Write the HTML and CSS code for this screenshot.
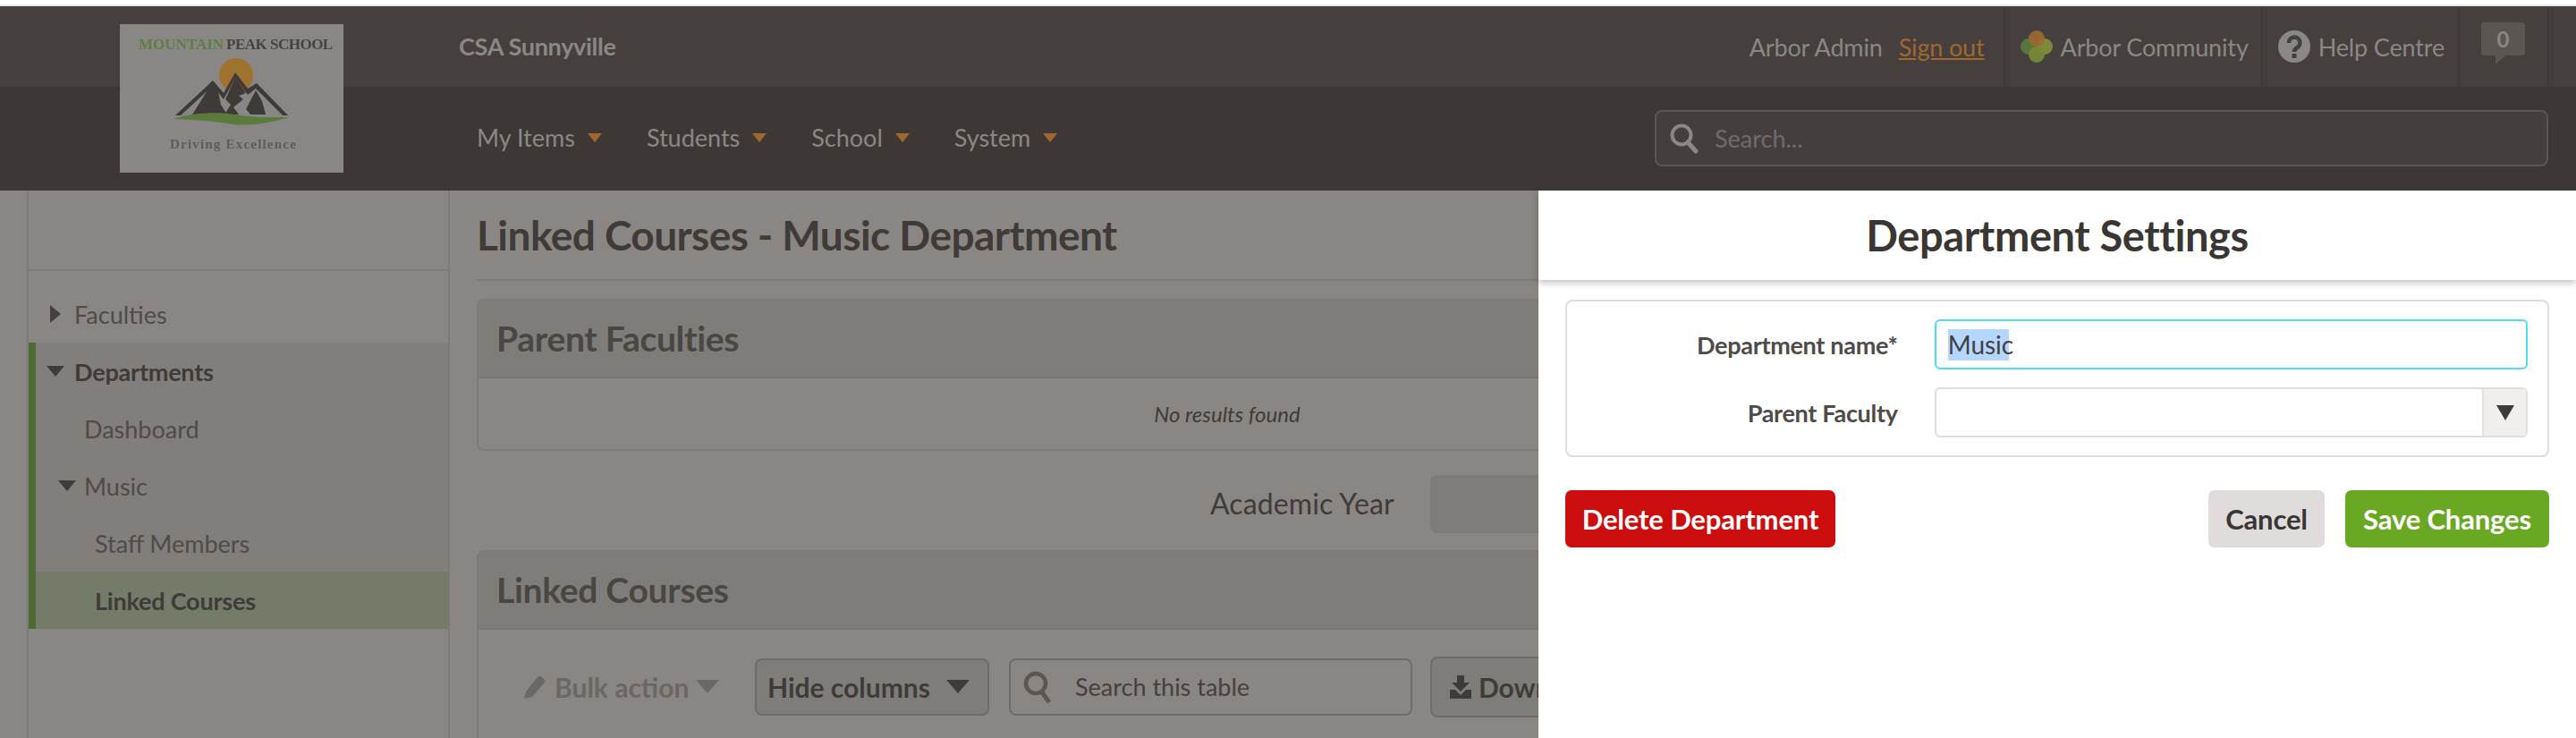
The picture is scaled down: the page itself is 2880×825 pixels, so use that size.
FILE: index.html
```html
<!DOCTYPE html>
<html lang="en">
<head>
<meta charset="utf-8">
<title>Linked Courses - Music Department</title>
<link rel="stylesheet" href="styles.css">
</head>
<body>
<div class="top-strip"></div>
<header class="header">
  <div class="logo">
    <svg class="logo-art" viewBox="0 0 250 166" width="250" height="166">
      <text x="21" y="28" class="logo-title logo-green">MOUNTAIN</text>
      <text x="119" y="28" class="logo-title logo-dark logo-tight">PEAK SCHOOL</text>
      <circle cx="130" cy="57" r="19" fill="#a0722f"/>
      <path d="M62 102 L104 63 L116 77 L129 54 L143 72 L153 66 L188 102 L182 102 L152 72 L143 79 L129 60 L116 84 L104 69 L68 102Z" fill="#3d3a38"/>
      <path d="M81 101 L103 66 L110 76 L113 90 L120 101Z M118 84 L129 60 L141 77 L133 80 L138 84 L127 93 L133 101 L117 101 L124 90Z M141 95 L152 74 L159 86 L163 101 L146 101Z" fill="#3d3a38"/>
      <path d="M60 106 C85 98 115 98 135 102 C155 105 175 104 189 104 C170 110 150 114 125 112 C105 108 80 107 60 106Z" fill="#5b7b3c"/>
      <text x="56" y="139" class="logo-tag">Driving Excellence</text>
    </svg>
  </div>
  <div class="school-name">CSA Sunnyville</div>
  <div class="top-links">
    <span class="user">Arbor Admin</span>
    <a class="signout">Sign out</a>
    <span class="top-sep"></span>
    <span class="top-link link-community">
      <svg class="community" viewBox="0 0 36 36" width="36" height="36">
        <circle cx="9" cy="18" r="9" fill="#57763f"/>
        <circle cx="27" cy="18" r="9" fill="#7c8a3a"/>
        <circle cx="18" cy="27" r="9" fill="#788a35" opacity=".92"/>
        <circle cx="18" cy="9" r="9" fill="#9c6a34" opacity=".9"/>
      </svg>
      Arbor Community
    </span>
    <span class="top-sep"></span>
    <span class="top-link link-help">
      <svg viewBox="0 0 36 36" width="36" height="36">
        <circle cx="18" cy="18" r="18" fill="#8a8886"/>
        <path d="M12 14 a6.2 6.2 0 1 1 9.5 5 c-2.5 1.6 -3.5 2.6 -3.5 5" fill="none" stroke="#45403d" stroke-width="4.6"/>
        <rect x="15.5" y="26" width="5" height="5" fill="#45403d"/>
      </svg>
      Help Centre
    </span>
    <span class="top-sep"></span>
    <span class="badge">0</span>
    <span class="top-sep last"></span>
  </div>
  <nav class="mainnav">
    <a class="nav-item">My Items<i class="caret caret-orange"></i></a>
    <a class="nav-item">Students<i class="caret caret-orange"></i></a>
    <a class="nav-item">School<i class="caret caret-orange"></i></a>
    <a class="nav-item">System<i class="caret caret-orange"></i></a>
  </nav>
  <div class="global-search">
    <svg viewBox="0 0 34 34" width="34" height="34"><circle cx="14" cy="13" r="10.5" fill="none" stroke="#8a8886" stroke-width="4"/><path d="M21 21 L30 31" stroke="#8a8886" stroke-width="5" stroke-linecap="round"/></svg>
    <span>Search...</span>
  </div>
</header>
<div class="app">
  <aside class="sidebar">
    <div class="side-top"></div>
    <ul class="side-nav">
      <li class="side-row lvl0"><i class="caret-right"></i>Faculties</li>
      <li class="side-group">
        <div class="side-row lvl0 strong"><i class="caret caret-dark"></i>Departments</div>
        <div class="side-row lvl1">Dashboard</div>
        <div class="side-row lvl1"><i class="caret caret-dark"></i>Music</div>
        <div class="side-row lvl2">Staff Members</div>
        <div class="side-row lvl2 strong active">Linked Courses</div>
      </li>
    </ul>
  </aside>
  <main class="main">
    <h1 class="page-title">Linked Courses - Music Department</h1>
    <section class="card">
      <h2 class="card-head">Parent Faculties</h2>
      <div class="empty">No results found</div>
    </section>
    <div class="year-row">
      <span class="year-label">Academic Year</span>
      <span class="year-select"></span>
    </div>
    <section class="card card-open">
      <h2 class="card-head">Linked Courses</h2>
      <div class="toolbar">
        <span class="bulk">
          <svg viewBox="0 0 24 26" width="24" height="26"><path d="M0 26 L2 18 L15 2 Q17 0 20 2 L23 5 Q24 7 22 9 L9 24Z" fill="#6a6764"/></svg>
          Bulk action<i class="caret caret-dim"></i>
        </span>
        <span class="tool-btn hide-cols">Hide columns<i class="caret caret-dark"></i></span>
        <span class="table-search">
          <svg viewBox="0 0 32 36" width="32" height="36"><circle cx="14" cy="14" r="11" fill="none" stroke="#5c5653" stroke-width="4.5"/><path d="M21 24 L29 35" stroke="#5c5653" stroke-width="5"/></svg>
          Search this table
        </span>
        <span class="tool-btn download">
          <svg viewBox="0 0 24 26" width="24" height="26"><path d="M8 0 H16 V8 H22 L12 18 L2 8 H8Z M0 16 H6 L12 22 L18 16 H24 V26 H0Z" fill="#3f3b38"/></svg>
          Download
        </span>
      </div>
    </section>
  </main>
  <section class="drawer">
    <h2 class="drawer-title">Department Settings</h2>
    <div class="drawer-body">
      <form class="form-box">
        <div class="form-row">
          <label class="form-label">Department name*</label>
          <div class="field field-focus"><span class="selected">Music</span></div>
        </div>
        <div class="form-row">
          <label class="form-label">Parent Faculty</label>
          <div class="field field-select"><span class="select-arrow"><i class="caret caret-dark"></i></span></div>
        </div>
      </form>
      <div class="actions">
        <button class="btn btn-danger" type="button">Delete Department</button>
        <button class="btn btn-plain push" type="button">Cancel</button>
        <button class="btn btn-go" type="button">Save Changes</button>
      </div>
    </div>
  </section>
</div>
</body>
</html>
```
FILE: styles.css
```css
* { box-sizing: border-box; }
html, body { margin: 0; height: 825px; overflow: hidden; }
body { background: #fff; font-family: "Lato", "Open Sans", sans-serif; font-size: 28px; color: #45403d; }
ul { list-style: none; margin: 0; padding: 0; }
h1, h2 { margin: 0; }
i { display: inline-block; }

.top-strip { height: 7px; border-bottom: 2px solid #e6e6e6; background: #fff; }

.header {
  height: 206px;
  display: grid;
  grid-template-columns: 134px 250px 1466px 1030px;
  grid-template-rows: 90px 116px;
  background: linear-gradient(#45403d 0, #45403d 90px, #3d3835 90px);
}
.logo { grid-column: 2; grid-row: 1 / 3; align-self: start; margin-top: 20px; height: 166px; background: #898785; }
.logo-art { display: block; filter: blur(.5px); }
.logo-title { font-family: "Liberation Serif", serif; font-weight: 700; font-size: 17px; }
.logo-tight { letter-spacing: -.5px; }
.logo-green { fill: #5f7f42; }
.logo-dark { fill: #454240; }
.logo-tag { font-family: "Liberation Serif", serif; font-weight: 700; font-size: 15px; letter-spacing: 1.2px; fill: #5e5c5a; }

.school-name { grid-column: 3; grid-row: 1; padding: 0 0 2px 129px; align-self: center; font-weight: 700; font-size: 27px; color: #8a8886; letter-spacing: -.3px; }

.top-links { grid-column: 3 / 5; grid-row: 1; justify-self: end; display: flex; align-items: center; height: 90px; color: #8a8886; font-size: 27px; padding-right: 30px; letter-spacing: -.15px; }
.user { margin-right: 18px; }
.signout { color: #a0682e; text-decoration: underline; margin-right: 21px; }
.top-sep { width: 2px; height: 90px; background: #3e3a37; }
.top-link { display: flex; align-items: center; gap: 9px; padding: 0 17px; }
.link-community { padding-right: 14px; }
.link-help { padding-right: 15px; }
.badge { width: 49px; height: 37px; margin: -18px 25px 0 24px; background: #5c5652; border-radius: 3px; color: #8a8886; font-weight: 700; font-size: 24px; line-height: 37px; text-align: center; position: relative; }
.badge::after { content: ""; position: absolute; left: 16px; top: 37px; border-left: 0 solid transparent; border-right: 12px solid transparent; border-top: 10px solid #5c5652; }

.mainnav { grid-column: 3; grid-row: 2; align-self: start; display: flex; gap: 50px; padding: 40px 0 0 149px; color: #8a8886; font-size: 27px; }
.nav-item { display: flex; align-items: center; gap: 14px; }

.caret { width: 0; height: 0; border-left: 10px solid transparent; border-right: 10px solid transparent; border-top: 12px solid #000; }
.caret-orange { border-top-color: #a0682e; border-left-width: 8px; border-right-width: 8px; border-top-width: 10px; margin-top: 1px; }
.caret-dark { border-top-color: #3f3b38; }
.caret-dim { border-top-color: #6a6764; }
.caret-right { width: 0; height: 0; border-top: 10px solid transparent; border-bottom: 10px solid transparent; border-left: 12px solid #45403d; }

.global-search { grid-column: 4; grid-row: 2; margin: 26px 31px 27px 0; height: 63px; display: flex; align-items: center; gap: 17px; padding-left: 14px; background: #443f3e; border: 2px solid #5b5653; border-radius: 8px; color: #6f6c6a; font-size: 27px; }

.app { position: relative; display: flex; height: 612px; overflow: hidden; background: #8a8684; }
.sidebar { width: 503px; flex: none; padding-left: 30px; display: flex; flex-direction: column; }
.side-top { height: 90px; border-left: 2px solid #7d7a78; border-right: 2px solid #7d7a78; border-bottom: 2px solid #7d7a78; }
.side-nav { flex: 1; border-left: 2px solid #7d7a78; border-right: 2px solid #7d7a78; padding-top: 16px; }
.side-row { height: 64px; display: flex; align-items: center; position: relative; font-size: 27px; color: #4f4b48; }
.lvl0 { padding-left: 51px; }
.lvl0 .caret-right { position: absolute; left: 24px; }
.strong { font-weight: 700; color: #3f3b38; letter-spacing: -.2px; }
.side-group { background: #827e7c; border-left: 8px solid #4f6b33; }
.side-group .lvl0 { padding-left: 43px; }
.side-group .lvl0 .caret { position: absolute; left: 12px; }
.side-group .lvl1 { padding-left: 54px; }
.side-group .lvl1 .caret { position: absolute; left: 25px; }
.side-group .lvl2 { padding-left: 66px; }
.active { background: #747b68; }

.main { width: 1738px; flex: none; padding: 0 30px; }
.page-title { height: 101px; border-bottom: 2px solid #7d7a78; font-size: 46px; line-height: 100px; font-weight: 700; color: #3f3b38; letter-spacing: -.55px; }
.card { margin-top: 20px; border: 2px solid #7d7a78; border-radius: 8px; }
.card-head { height: 87px; padding-left: 20px; background: #7f7d7a; border-bottom: 2px solid #787572; border-radius: 6px 6px 0 0; font-size: 39px; line-height: 85px; color: #4a4643; letter-spacing: -.3px; }
.empty { height: 79px; line-height: 79px; text-align: center; font-style: italic; font-size: 24px; color: #3f3b38; }
.year-row { height: 111px; padding: 27px 0 19px 820px; display: flex; gap: 40px; align-items: center; }
.year-label { font-size: 32px; color: #3f3b38; letter-spacing: .1px; margin-top: -2px; }
.year-select { width: 300px; height: 65px; background: #7f7d7a; border: 2px solid #7d7a78; border-radius: 8px; }
.card-open { margin-top: 0; height: 300px; }
.toolbar { display: flex; align-items: center; height: 130px; padding: 0 0 3px 51px; font-size: 30px; }
.bulk { display: flex; align-items: center; gap: 10px; font-weight: 700; color: #6a6764; width: 258px; }
.bulk .caret { margin-left: -2px; border-left-width: 13px; border-right-width: 13px; border-top-width: 15px; }
.tool-btn { display: flex; align-items: center; font-weight: 700; font-size: 30px; color: #3f3b38; background: #7f7d7a; border: 2px solid #6f6c69; border-radius: 8px; }
.hide-cols { width: 262px; height: 64px; padding-left: 12px; gap: 18px; }
.hide-cols .caret { border-left-width: 13px; border-right-width: 13px; border-top-width: 15px; }
.table-search { display: flex; align-items: center; gap: 26px; width: 451px; height: 64px; margin-left: 22px; padding-left: 14px; border: 2px solid #6f6c69; border-radius: 8px; color: #45403d; font-size: 27px; }
.download { width: 260px; height: 68px; margin-left: 20px; padding-left: 20px; gap: 8px; }

.drawer { position: absolute; top: 0; left: 1720px; width: 1160px; height: 612px; background: #fff; }
.drawer-title { height: 100px; line-height: 100px; text-align: center; font-size: 47px; color: #3a3633; box-shadow: 0 3px 8px rgba(0,0,0,.25); letter-spacing: -.4px; position: relative; }
.drawer-body { padding: 22px 30px 0 30px; }
.form-box { display: flex; flex-direction: column; gap: 20px; height: 176px; padding: 20px 22px 0 0; border: 2px solid #dedddd; border-radius: 8px; }
.form-row { display: flex; align-items: center; }
.form-label { width: 370px; text-align: right; margin-right: 41px; font-weight: 700; font-size: 27px; color: #4f4b48; letter-spacing: -.3px; }
.field { width: 664px; height: 56px; border: 2px solid #dedddd; border-radius: 6px; display: flex; align-items: center; }
.field-focus { border-color: #50dcf5; padding-left: 13px; }
.selected { background: #b3d7ff; height: 35px; line-height: 35px; color: #45403d; font-size: 28px; width: 68px; }
.field-select { justify-content: flex-end; }
.select-arrow { width: 49px; height: 100%; display: flex; align-items: center; justify-content: center; background: #f0efee; border-left: 2px solid #e2e1e0; }
.select-arrow .caret { border-left-width: 10px; border-right-width: 10px; border-top-width: 17px; }
.actions { display: flex; gap: 23px; margin-top: 37px; }
.btn { height: 64px; border: 0; border-radius: 7px; font-family: inherit; font-weight: 700; font-size: 31px; letter-spacing: -.15px; padding: 0; }
.btn-danger { width: 302px; background: #cc0d0d; color: #fff; }
.btn-plain { width: 130px; background: #e0dcdb; color: #3a3633; }
.btn-go { width: 228px; background: #6aa823; color: #fff; }
.push { margin-left: auto; }
```
